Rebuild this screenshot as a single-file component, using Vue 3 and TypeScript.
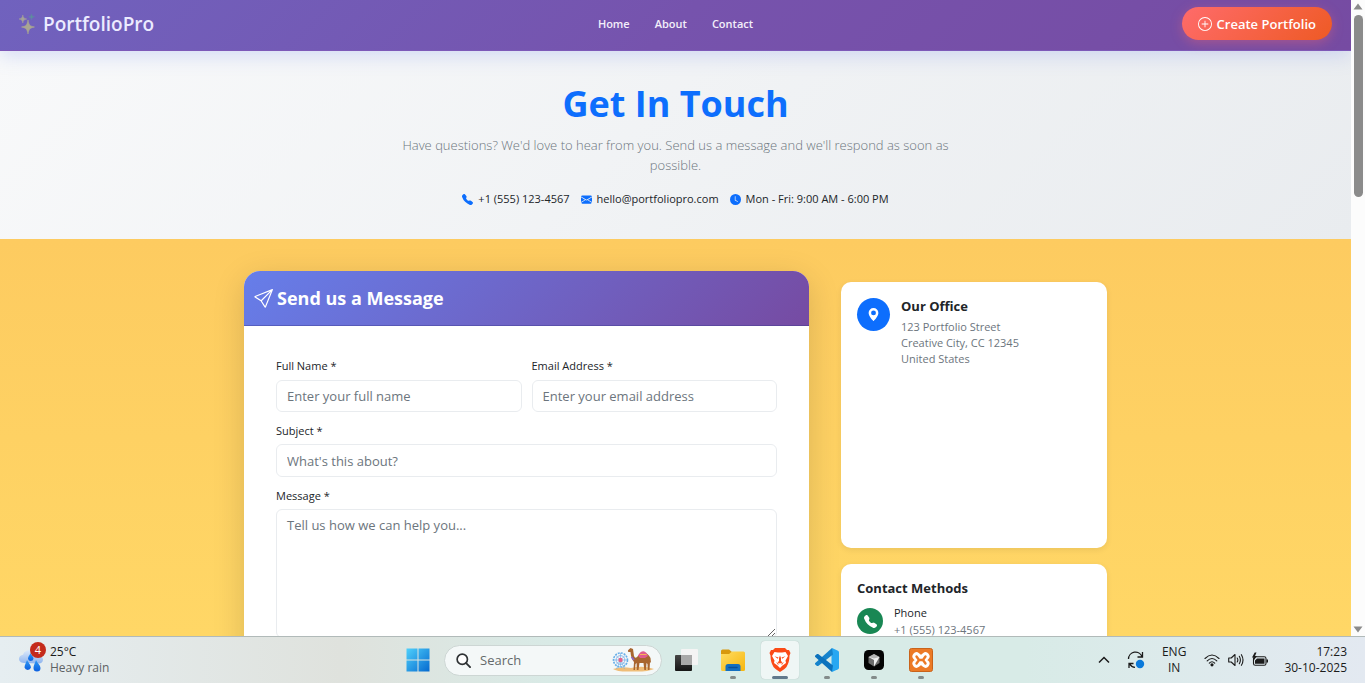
<script setup lang="ts">
import { ref } from 'vue'

interface ContactLine {
  label: string
  path: string
}

const phonePath =
  'M1.885.511a1.745 1.745 0 0 1 2.61.163L6.29 2.98c.329.423.445.974.315 1.494l-.547 2.19a.68.68 0 0 0 .178.643l2.457 2.457a.68.68 0 0 0 .644.178l2.189-.547a1.75 1.75 0 0 1 1.494.315l2.306 1.794c.829.645.905 1.87.163 2.611l-1.034 1.034c-.74.74-1.846 1.065-2.877.702a18.6 18.6 0 0 1-7.01-4.42 18.6 18.6 0 0 1-4.42-7.009c-.362-1.03-.037-2.137.703-2.877z'

const navLinks: string[] = ['Home', 'About', 'Contact']

const contactLines: ContactLine[] = [
  { label: '+1 (555) 123-4567', path: phonePath },
  {
    label: 'hello@portfoliopro.com',
    path: 'M.05 3.555A2 2 0 0 1 2 2h12a2 2 0 0 1 1.95 1.555L8 8.414zM0 4.697v7.104l5.803-3.558zM6.761 8.83l-6.57 4.027A2 2 0 0 0 2 14h12a2 2 0 0 0 1.808-1.144l-6.57-4.027L8 9.586zm3.436-.586L16 11.801V4.697z',
  },
  {
    label: 'Mon - Fri: 9:00 AM - 6:00 PM',
    path: 'M16 8A8 8 0 1 1 0 8a8 8 0 0 1 16 0M8 3.5a.5.5 0 0 0-1 0V9a.5.5 0 0 0 .252.434l3.5 2a.5.5 0 0 0 .496-.868L8 8.71z',
  },
]

const fullName = ref('')
const email = ref('')
const subject = ref('')
const message = ref('')
const search = ref('')
</script>

<template>
  <div class="screen">
    <div class="browser">
      <div class="page">
        <header class="topbar">
          <a class="brand" href="#">
            <svg class="sparkles" viewBox="0 0 16 20" aria-hidden="true">
              <path d="M9 6C10 11 10.500 12 15.500 13C10.500 14.200 10 15 9 20C8 15 7.500 14.200 2.500 13C7.500 12 8 11 9 6Z" fill="#a9a692" stroke="#a9a692" stroke-width="0.600" />
              <path d="M3.800 1C4.400 3.700 4.800 4.400 7.700 5C4.800 5.700 4.400 6.300 3.800 9C3.200 6.300 2.800 5.700 0 5C2.800 4.400 3.200 3.700 3.800 1Z" fill="#a5a298" stroke="#a5a298" stroke-width="0.500" />
              <path d="M12.500 0C13 1.900 13.200 2.300 15.500 2.800C13.200 3.300 13 3.700 12.500 5.600C12 3.700 11.800 3.300 9.800 2.800C11.800 2.300 12 1.900 12.500 0Z" fill="#5f8aa0" stroke="#5f8aa0" stroke-width="0.500" />
            </svg>
            <span>PortfolioPro</span>
          </a>
          <nav class="nav">
            <a v-for="link in navLinks" :key="link" href="#">{{ link }}</a>
          </nav>
          <button class="create" type="button">
            <svg viewBox="0 0 16 16" aria-hidden="true">
              <path d="M8 15A7 7 0 1 1 8 1a7 7 0 0 1 0 14m0 1A8 8 0 1 0 8 0a8 8 0 0 0 0 16" />
              <path d="M8 4a.5.5 0 0 1 .5.5v3h3a.5.5 0 0 1 0 1h-3v3a.5.5 0 0 1-1 0v-3h-3a.5.5 0 0 1 0-1h3v-3A.5.5 0 0 1 8 4" />
            </svg>
            <span>Create Portfolio</span>
          </button>
        </header>

        <section class="hero">
          <h1>Get In Touch</h1>
          <p class="lead">
            Have questions? We'd love to hear from you. Send us a message and we'll respond as soon as possible.
          </p>
          <ul class="quick">
            <li v-for="line in contactLines" :key="line.label">
              <svg viewBox="0 0 16 16" aria-hidden="true"><path :d="line.path" /></svg>
              <span>{{ line.label }}</span>
            </li>
          </ul>
        </section>

        <main class="content">
          <div class="columns">
            <section class="form-card">
              <h2>
                <svg viewBox="0 0 16 16" aria-hidden="true">
                  <path d="M15.854.146a.5.5 0 0 1 .11.54l-5.819 14.547a.75.75 0 0 1-1.329.124l-3.178-4.995L.643 7.184a.75.75 0 0 1 .124-1.33L15.314.037a.5.5 0 0 1 .54.11ZM6.636 10.07l2.761 4.338L14.13 2.576zm6.787-8.201L1.591 6.602l4.339 2.76z" />
                </svg>
                <span>Send us a Message</span>
              </h2>
              <form @submit.prevent>
                <div class="field">
                  <label for="name">Full Name *</label>
                  <input id="name" v-model="fullName" type="text" placeholder="Enter your full name" />
                </div>
                <div class="field">
                  <label for="email">Email Address *</label>
                  <input id="email" v-model="email" type="email" placeholder="Enter your email address" />
                </div>
                <div class="field wide">
                  <label for="subject">Subject *</label>
                  <input id="subject" v-model="subject" type="text" placeholder="What's this about?" />
                </div>
                <div class="field wide">
                  <label for="message">Message *</label>
                  <textarea id="message" v-model="message" placeholder="Tell us how we can help you..."></textarea>
                </div>
              </form>
            </section>

            <aside class="side">
              <section class="info-card">
                <div class="row">
                  <span class="badge blue">
                    <svg viewBox="0 0 16 16" aria-hidden="true">
                      <path d="M8 16s6-5.686 6-10A6 6 0 0 0 2 6c0 4.314 6 10 6 10m0-7a3 3 0 1 1 0-6 3 3 0 0 1 0 6" />
                    </svg>
                  </span>
                  <div>
                    <h3>Our Office</h3>
                    <address>123 Portfolio Street<br />Creative City, CC 12345<br />United States</address>
                  </div>
                </div>
              </section>
              <section class="info-card">
                <h3>Contact Methods</h3>
                <div class="row method">
                  <span class="badge green">
                    <svg viewBox="0 0 16 16" aria-hidden="true"><path :d="phonePath" /></svg>
                  </span>
                  <div>
                    <p class="method-name">Phone</p>
                    <p class="method-value">+1 (555) 123-4567</p>
                  </div>
                </div>
              </section>
            </aside>
          </div>
        </main>
      </div>

      <div class="scrollbar" aria-hidden="true">
        <svg viewBox="0 0 10 7"><path d="M5 0.500L9.500 6.500H0.500Z" /></svg>
        <div class="track"><div class="thumb"></div></div>
        <svg viewBox="0 0 10 7"><path d="M5 6.500L9.500 0.500H0.500Z" /></svg>
      </div>
    </div>

    <footer class="taskbar">
      <div class="weather">
        <div class="weather-icon">
          <svg viewBox="0 0 24 24" aria-hidden="true">
            <defs>
              <linearGradient id="cloud" x1="0" y1="0" x2="0" y2="1">
                <stop offset="0" stop-color="#dceafb" />
                <stop offset="1" stop-color="#8fb4ee" />
              </linearGradient>
              <linearGradient id="drop" x1="0" y1="0" x2="0" y2="1">
                <stop offset="0" stop-color="#2f9bf5" />
                <stop offset="1" stop-color="#0c5fe0" />
              </linearGradient>
            </defs>
            <path d="M5 15C1.500 15 0 12.800 0 10.800C0 8.400 1.800 6.900 4 6.700C5 3.500 8 2 11 2C15.500 2 18 5 18.400 7.500C21.800 7.300 24 9.200 24 11.800C24 14 22.200 15.500 20 15.500Z" fill="url(#cloud)" />
            <path d="M11.500 5C12.500 7.500 14.500 8.700 14.500 10.800A2.800 2.800 0 0 1 9 10.800C9 8.700 10.500 7.500 11.500 5Z" fill="url(#drop)" />
            <path d="M8 12C9.500 15 12 17 12 19.500A3.400 3.400 0 0 1 5.500 19.500C5.500 17 7 15 8 12Z" fill="url(#drop)" />
            <path d="M17 12C18.500 15 21.500 17.500 21.500 20A3.500 3.500 0 0 1 14.500 20C14.500 17.500 16 15 17 12Z" fill="url(#drop)" />
          </svg>
          <span class="count">4</span>
        </div>
        <div class="stack">
          <span>25°C</span>
          <span class="muted">Heavy rain</span>
        </div>
      </div>

      <div class="apps">
        <button class="app" type="button" aria-label="Start">
          <svg viewBox="0 0 24 24">
            <defs>
              <linearGradient id="win" x1="0" y1="0" x2="1" y2="1">
                <stop offset="0" stop-color="#4fd0fb" />
                <stop offset="1" stop-color="#0569cf" />
              </linearGradient>
            </defs>
            <path d="M0.500 0.500H11.500V11.500H0.500ZM12.500 0.500H23.500V11.500H12.500ZM0.500 12.500H11.500V23.500H0.500ZM12.500 12.500H23.500V23.500H12.500Z" fill="url(#win)" />
          </svg>
        </button>
        <label class="search">
          <svg class="glass" viewBox="0 0 16 16" aria-hidden="true">
            <circle cx="6.700" cy="6.700" r="5.500" fill="#fff" stroke="#2f3335" stroke-width="1.800" />
            <path d="M10.800 10.800L15 15" stroke="#2f3335" stroke-width="2" stroke-linecap="round" />
          </svg>
          <input v-model="search" type="text" placeholder="Search" aria-label="Search" />
          <svg class="fair" viewBox="0 0 42 26" aria-hidden="true">
            <path d="M1 22Q9 19 19 21Q31 18 42 22Q36 25 20 24.500Q5 25 1 22Z" fill="#efbd78" />
            <g fill="none" stroke="#67aee8">
              <circle cx="8.500" cy="13" r="7" stroke-width="1.600" stroke-dasharray="2 1" />
              <circle cx="8.500" cy="13" r="4.400" stroke="#8fb5ea" />
              <path d="M8.500 6V20M1.500 13H15.500M3.500 8L13.500 18M13.500 8L3.500 18M8.500 13L4.500 22M8.500 13L12.500 22" stroke-width="0.600" />
            </g>
            <circle cx="8.500" cy="13" r="2.200" fill="#e4638a" />
            <path d="M16 3.200L18.500 1L21 2L22 9Q23 12 25 10Q28 6 31 5Q36 6 38.500 11L39 16L38 15L37.500 23H35.800L35.500 17L34.500 16L34 23H32.300L31.500 16H27.500L26.500 23H24.800L24.600 16L23.500 17L23 23H21.500L22 15Q19 12 18.500 5H16.200Z" fill="#a8662f" />
            <path d="M26 8.500Q28.500 4 31.500 4.200Q34.500 5 36 9L33 11H28Z" fill="#e05c8d" />
            <path d="M28 7.500H34.500" stroke="#f7b556" />
            <path d="M19.500 10L22 13" stroke="#8e63c4" stroke-width="1.600" />
          </svg>
        </label>
        <button class="app" type="button" aria-label="Task view">
          <svg viewBox="0 0 24 24">
            <defs>
              <linearGradient id="tv" x1="0" y1="0" x2="0" y2="1">
                <stop offset="0" stop-color="#464646" /><stop offset="1" stop-color="#151515" />
              </linearGradient>
            </defs>
            <rect x="1" y="7" width="17" height="16" rx="1" fill="url(#tv)" />
            <rect x="7" y="1" width="17" height="16" rx="1" fill="#f4f4f4" />
            <path d="M7 7H18V17H8Q7 17 7 16Z" fill="#a9a9a9" />
          </svg>
        </button>
        <button class="app running" type="button" aria-label="File Explorer">
          <svg viewBox="0 0 24 24">
            <defs>
              <linearGradient id="folder" x1="0" y1="0" x2="1" y2="1">
                <stop offset="0" stop-color="#ffdc62" /><stop offset="1" stop-color="#f7b60d" />
              </linearGradient>
            </defs>
            <path d="M0 3Q0 1.500 1.500 1.500H8L11 4V8H0Z" fill="#d8980d" />
            <path d="M0 6H8L11 3.500H22.500Q24 3.500 24 5V21.500Q24 23 22.500 23H1.500Q0 23 0 21.500Z" fill="url(#folder)" />
            <path d="M4.500 23V18.500Q4.500 16 7 16H17Q19.500 16 19.500 18.500V23Z" fill="#146fc0" />
            <path d="M8 19.500H16" stroke="#0b4f97" stroke-width="1.500" stroke-linecap="round" />
          </svg>
        </button>
        <button class="app running active" type="button" aria-label="Brave">
          <svg viewBox="0 0 24 24">
            <path d="M7 0H17L19 2H21L22.500 5L21.500 7.500Q21.500 14 18.500 19Q17 21 12 24Q7 21 5.500 19Q2.500 14 2.500 7.500L1.500 5L3 2H5Z" fill="#fb4a17" />
            <path d="M6.500 4L10 4.500H14L17.500 4L20 8L17.500 12.500L18 15L14.500 17.500L12 20L9.500 17.500L6 15L6.500 12.500L4 8Z" fill="#fff" />
            <path d="M6.500 8.300L10.500 9.500L9.800 10.700ZM17.500 8.300L13.500 9.500L14.200 10.700ZM11 10V13L9.500 14.500L12 15.500L14.500 14.500L13 13V10L12 7.500ZM8 14L11 16L10 16.800ZM16 14L13 16L14 16.800Z" fill="#fb4a17" />
          </svg>
        </button>
        <button class="app running" type="button" aria-label="Visual Studio Code">
          <svg viewBox="0 0 24 24">
            <path d="M17 0L23 2.700Q24 3.200 24 4.300V19.700Q24 20.800 23 21.300L17 24L16.500 17V7Z" fill="#27a7f2" />
            <path d="M17 0L18 6.500L3.200 18L2 18L0 16.200V15.200Z" fill="#1583cc" />
            <path d="M17 24L18 17.500L3.200 6L2 6L0 7.800V8.800Z" fill="#0b72bd" />
          </svg>
        </button>
        <button class="app running" type="button" aria-label="Cursor">
          <svg viewBox="0 0 24 24">
            <rect x="2" y="2" width="20" height="20" rx="4.500" fill="#050505" />
            <path d="M12 6L17.500 9V15L12 18.500L6.500 15V9Z" fill="#6d6d6d" />
            <path d="M6.500 9H17.500L12 18.500V12Z" fill="#f0f0f0" />
            <path d="M6.500 9L12 6L17.500 9L12 10.500Z" fill="#b5b5b5" />
          </svg>
        </button>
        <button class="app running" type="button" aria-label="XAMPP">
          <svg viewBox="0 0 24 24">
            <rect x="0.500" y="0.500" width="23" height="23" rx="2" fill="#ec7a26" stroke="#c9631b" />
            <g fill="none" stroke-linecap="round">
              <path d="M7.500 8.300L16.500 15.700M16.500 8.300L7.500 15.700" stroke="#fff" stroke-width="8" />
              <path d="M7.500 8.500L10 12H14L16.500 8.500M7.500 15.500L10 12M14 12L16.500 15.500" stroke="#ec7a26" stroke-width="2.400" stroke-linejoin="round" />
            </g>
          </svg>
        </button>
      </div>

      <div class="tray">
        <svg class="chevron" viewBox="0 0 12 8" aria-hidden="true"><path d="M1 6.500L6 1.500L11 6.500" fill="none" stroke="#1b1b1b" stroke-width="1.500" /></svg>
        <svg class="sync" viewBox="0 0 18 18" aria-hidden="true">
          <g fill="none" stroke="#1b1b1b" stroke-width="1.300">
            <path d="M1.500 8A7 7 0 0 1 15 5.500M15.500 1V6H10.500M2 17V12.500H6.500M2.500 12.800Q4.500 16 8 16.300" />
          </g>
          <circle cx="13" cy="13" r="4.200" fill="#0a79da" />
        </svg>
        <div class="stack centered"><span>ENG</span><span>IN</span></div>
        <div class="status">
          <svg viewBox="0 0 16 16" aria-hidden="true">
            <g fill="none" stroke="#1b1b1b" stroke-width="1.100" stroke-linecap="round">
              <path d="M1 6.500Q8 -0.500 15 6.500M3.200 8.900Q8 4 12.800 8.900M5.300 11.200Q8 8.200 10.700 11.200" />
            </g>
            <circle cx="8" cy="12.800" r="1.600" fill="#1b1b1b" />
          </svg>
          <svg viewBox="0 0 16 16" aria-hidden="true">
            <g fill="none" stroke="#1b1b1b" stroke-width="1.100" stroke-linecap="round" stroke-linejoin="round">
              <path d="M0.700 6H3.200L7 2.500V13.500L3.200 10H0.700ZM9.200 6Q10.500 8 9.200 10M11.300 4.300Q13.500 8 11.300 11.700M13.400 2.700Q16.600 8 13.400 13.300" />
            </g>
          </svg>
          <svg viewBox="0 0 16 16" aria-hidden="true">
            <rect x="1.500" y="4.700" width="12.500" height="8.600" rx="1.800" fill="none" stroke="#1b1b1b" stroke-width="1.100" />
            <path d="M5 6.500H12.500V11.700H3V8.500ZM14.500 7.500H16V10.500H14.500ZM2.700 0.500L0 5.500H2L1.300 9L5 4H3L4.500 0.500Z" fill="#1b1b1b" />
          </svg>
        </div>
        <div class="stack clock"><span>17:23</span><span>30-10-2025</span></div>
      </div>
    </footer>
  </div>
</template>

<style>
body {
  margin: 0;
  overflow: hidden;
}
</style>

<style scoped>
* {
  box-sizing: border-box;
}

.screen {
  display: flex;
  flex-direction: column;
  height: 100vh;
  font-family: 'Open Sans', 'Noto Sans', sans-serif;
  font-size: 11px;
  color: #212529;
}

h1,
h2,
h3,
p,
ul {
  margin: 0;
  padding: 0;
}

a {
  text-decoration: none;
}

.browser {
  display: flex;
  flex: 1;
  min-height: 0;
}

.page {
  display: flex;
  flex-direction: column;
  flex: 1;
  overflow: hidden;
}

.topbar {
  position: relative;
  z-index: 1;
  display: grid;
  grid-template-columns: 1fr auto 1fr;
  align-items: center;
  flex: none;
  height: 51px;
  padding: 0 19px 3px;
  background: linear-gradient(135deg, #7062be, #7653ad 50%, #764ba2);
  border-bottom: 1px solid #7d59b8;
  box-shadow: 0 4px 20px rgba(102, 126, 234, 0.25);
}

.brand {
  display: flex;
  align-items: center;
  gap: 8px;
  font-size: 19px;
  font-weight: 600;
  line-height: 28px;
  color: #ecebff;
}

.sparkles {
  width: 16px;
  height: 20px;
}

.nav {
  display: flex;
  gap: 25px;
}

.nav a {
  font-size: 11px;
  font-weight: 600;
  line-height: 16px;
  color: #f3effa;
}

.create {
  display: flex;
  justify-self: end;
  align-items: center;
  gap: 5px;
  height: 33px;
  padding: 0 16px;
  border: 0;
  border-radius: 17px;
  background: linear-gradient(135deg, #ff6b6b, #ee5a24);
  box-shadow: 0 3px 12px rgba(255, 107, 107, 0.35);
  font-family: inherit;
  font-size: 13px;
  font-weight: 600;
  color: #fff;
}

.create svg {
  width: 14px;
  height: 14px;
  fill: currentColor;
}

.hero {
  display: flex;
  flex-direction: column;
  align-items: center;
  flex: none;
  height: 188px;
  padding: 30px 16px;
  background: linear-gradient(135deg, #f8f9fa, #e9ecef);
  text-align: center;
}

.hero h1 {
  font-size: 36px;
  font-weight: 700;
  line-height: 46px;
  color: #0d6efd;
}

.lead {
  max-width: 560px;
  padding: 8px 0 16px;
  font-size: 13px;
  font-weight: 300;
  line-height: 20px;
  color: #6c757d;
}

.quick {
  display: flex;
  gap: 11px;
  list-style: none;
}

.quick li {
  display: flex;
  align-items: center;
  gap: 5px;
  line-height: 16px;
}

.quick svg {
  width: 11px;
  height: 11px;
  fill: #0d6efd;
}

.content {
  flex: 1;
  min-height: 0;
  padding: 32px 16px 0;
  background: linear-gradient(#fdcb60, #ffd766);
}

.columns {
  display: grid;
  grid-template-columns: 565fr 266fr;
  gap: 32px;
  align-items: start;
  max-width: 863px;
  margin: 0 auto;
}

.form-card {
  overflow: hidden;
  border-radius: 16px;
  background: #fff;
  box-shadow: 0 8px 32px rgba(0, 0, 0, 0.15);
}

.form-card h2 {
  display: flex;
  align-items: center;
  gap: 4px;
  height: 55px;
  padding: 0 10px;
  border-bottom: 1px solid rgba(60, 50, 130, 0.4);
  background: linear-gradient(135deg, #667eea, #764ba2);
  font-size: 18px;
  font-weight: 700;
  color: #fff;
}

.form-card h2 svg {
  width: 19px;
  height: 19px;
  fill: currentColor;
}

form {
  display: grid;
  grid-template-columns: 1fr 1fr;
  gap: 11px 10px;
  padding: 32px;
}

.field {
  display: flex;
  flex-direction: column;
  gap: 6px;
}

.wide {
  grid-column: 1 / -1;
  gap: 5px;
}

.field label {
  line-height: 16px;
}

.field input,
.field textarea {
  width: 100%;
  border: 1px solid #e9ecef;
  border-radius: 6px;
  padding: 5px 10px;
  background: #fff;
  font-family: inherit;
  font-size: 13px;
  line-height: 20px;
  color: #212529;
  outline: none;
}

.field input {
  height: 32px;
}

.wide input {
  height: 33px;
}

.field textarea {
  display: block;
  height: 129px;
  resize: vertical;
}

.field input::placeholder,
.field textarea::placeholder {
  color: #6c757d;
}

.side {
  display: flex;
  flex-direction: column;
  gap: 16px;
  padding-top: 11px;
}

.info-card {
  min-height: 266px;
  padding: 16px;
  border-radius: 10px;
  background: #fff;
  box-shadow: 0 2px 6px rgba(0, 0, 0, 0.08);
}

.info-card h3 {
  font-size: 13px;
  font-weight: 700;
  line-height: 16px;
}

.row {
  display: flex;
  gap: 11px;
}

.badge {
  display: flex;
  align-items: center;
  justify-content: center;
  flex: none;
  border-radius: 50%;
}

.badge svg {
  width: 13px;
  height: 13px;
  fill: #fff;
}

.blue {
  width: 33px;
  height: 33px;
  background: #0d6efd;
}

.green {
  width: 26px;
  height: 26px;
  background: #198754;
}

address {
  padding-top: 5px;
  font-style: normal;
  line-height: 16px;
  color: #6c757d;
}

.method {
  align-items: center;
  padding-top: 8px;
}

.method-name,
.method-value {
  line-height: 17px;
}

.method-value {
  color: #6c757d;
}

.scrollbar {
  display: flex;
  flex-direction: column;
  align-items: center;
  width: 14px;
  padding: 3px 0;
  background: #fcfcfc;
}

.scrollbar svg {
  width: 10px;
  height: 7px;
  fill: #8b8b8b;
}

.track {
  flex: 1;
  padding: 5px 0;
}

.thumb {
  width: 9px;
  height: 30%;
  border-radius: 5px;
  background: #8b8b8b;
}

.taskbar {
  display: grid;
  grid-template-columns: 1fr auto 1fr;
  align-items: center;
  flex: none;
  height: 47px;
  padding-right: 18px;
  border-top: 1px solid #b1bab9;
  background: linear-gradient(90deg, #e6eef1, #dfe2dd 25%, #d8ebe7 42%, #d8ebe7 75%, #e3e9f1);
  font-size: 12px;
  color: #1b1b1b;
}

.weather {
  display: flex;
  align-items: center;
  gap: 7px;
  padding-left: 19px;
}

.weather-icon {
  position: relative;
  width: 24px;
  height: 24px;
}

.weather-icon svg {
  display: block;
  width: 24px;
  height: 24px;
}

.count {
  position: absolute;
  top: -6px;
  right: -3px;
  width: 16px;
  height: 16px;
  border-radius: 50%;
  background: #c42b1c;
  font-size: 11px;
  line-height: 16px;
  text-align: center;
  color: #fff;
}

.stack {
  display: flex;
  flex-direction: column;
  line-height: 16px;
}

.muted {
  color: #5d6264;
}

.apps {
  display: flex;
  align-items: center;
  gap: 9px;
  padding-right: 8px;
}

.app {
  position: relative;
  display: flex;
  align-items: center;
  justify-content: center;
  width: 38px;
  height: 38px;
  padding: 0;
  border: 0;
  border-radius: 4px;
  background: none;
}

.app svg {
  width: 24px;
  height: 24px;
}

.active {
  background: #eff6f5;
  box-shadow: 0 0 1px rgba(0, 0, 0, 0.25);
}

.running::after {
  content: '';
  position: absolute;
  bottom: 0;
  left: 50%;
  width: 6px;
  height: 3px;
  margin-left: -3px;
  border-radius: 2px;
  background: #838b8a;
}

.active::after {
  width: 16px;
  margin-left: -8px;
  background: #61788b;
}

.search {
  display: flex;
  align-items: center;
  width: 218px;
  height: 31px;
  margin: 0 -4px 0 -2px;
  padding: 0 7px 0 11px;
  border: 1px solid #cdd6d4;
  border-radius: 16px;
  background: #f4f8f8;
}

.glass {
  flex: none;
  width: 15px;
  height: 15px;
}

.search input {
  flex: 1;
  min-width: 0;
  padding: 0 9px;
  border: 0;
  background: none;
  font-family: inherit;
  font-size: 13px;
  outline: none;
}

.search input::placeholder {
  color: #646a6a;
}

.fair {
  flex: none;
  width: 42px;
  height: 26px;
}

.tray {
  display: flex;
  align-items: center;
  justify-content: flex-end;
}

.chevron {
  width: 12px;
  height: 8px;
  margin-right: 17px;
}

.sync {
  width: 18px;
  height: 18px;
  margin-right: 17px;
}

.centered {
  align-items: center;
}

.status {
  display: flex;
  gap: 8px;
  margin: 0 16px 0 18px;
}

.status svg {
  width: 16px;
  height: 16px;
}

.clock {
  align-items: flex-end;
}
</style>
